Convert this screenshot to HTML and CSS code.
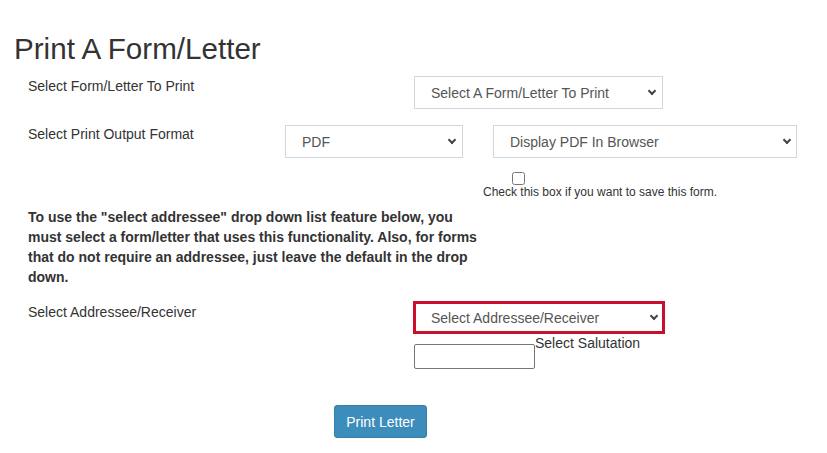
FILE: index.html
```
<!DOCTYPE html>
<html lang="en">
<head>
<meta charset="utf-8">
<title>Print A Form/Letter</title>
<link rel="stylesheet" href="styles.css">
</head>
<body>
<div class="page">
  <h1 class="title">Print A Form/Letter</h1>
  <form class="form">
    <div class="row row-form">
      <label class="lbl lbl-wide">Select Form/Letter To Print</label>
      <span class="sel sel-form"><select><option>Select A Form/Letter To Print</option></select></span>
    </div>
    <div class="row row-format">
      <label class="lbl lbl-narrow">Select Print Output Format</label>
      <span class="sel sel-pdf"><select><option>PDF</option></select></span>
      <span class="sel sel-display"><select><option>Display PDF In Browser</option></select></span>
    </div>
    <div class="save">
      <input type="checkbox" class="save-box">
      <div class="save-text">Check this box if you want to save this form.</div>
    </div>
    <p class="note">To use the "select addressee" drop down list feature below, you must select a form/letter that uses this functionality. Also, for forms that do not require an addressee, just leave the default in the drop down.</p>
    <div class="row row-addr">
      <label class="lbl lbl-addr">Select Addressee/Receiver</label>
      <span class="sel sel-addr"><select><option>Select Addressee/Receiver</option></select></span>
    </div>
    <div class="salutation">
      <input type="text" class="sal-input">
      <span class="sal-text">Select Salutation</span>
    </div>
    <button type="button" class="btn">Print Letter</button>
  </form>
</div>
</body>
</html>
```
FILE: styles.css
```
html, body {
  margin: 0;
  padding: 0;
  background: #ffffff;
}
body {
  font-family: "Liberation Sans", Arial, sans-serif;
  color: #333333;
  font-size: 14px;
}
.title {
  margin: 32px 0 0 14px;
  font-size: 29.6px;
  line-height: 34px;
  font-weight: normal;
  color: #333333;
}
.form {
  margin: 0;
  padding-left: 28px;
}
.row {
  display: flex;
  align-items: flex-start;
}
.lbl {
  flex: none;
  font-size: 14px;
  line-height: 20px;
  color: #333333;
}
.lbl-wide { width: 386px; }
.lbl-narrow { width: 257px; margin-top: -1px; }
.lbl-addr { width: 385px; margin-top: 1px; }
.row-form { margin-top: 10px; }
.row-format { margin-top: 16px; }
.sel {
  position: relative;
  display: block;
  flex: none;
}
.sel select {
  display: block;
  width: 100%;
  height: 33px;
  box-sizing: border-box;
  appearance: none;
  -webkit-appearance: none;
  border: 1px solid #d2d6de;
  border-radius: 0;
  background: #ffffff;
  color: #555555;
  font-family: "Liberation Sans", Arial, sans-serif;
  font-size: 14px;
  padding: 0 20px 0 16px;
  margin: 0;
}
.sel::after {
  content: "";
  position: absolute;
  right: 8px;
  top: 12px;
  width: 4px;
  height: 4px;
  border-right: 2px solid #444444;
  border-bottom: 2px solid #444444;
  transform: rotate(45deg);
  pointer-events: none;
}
.sel-form { width: 249px; }
.sel-pdf { width: 178px; }
.sel-display { width: 304px; margin-left: 30px; }
.sel-display::after { right: 7px; }
.sel-addr { width: 252px; margin-left: 0; }
.sel-addr select {
  border: 3px solid #c8102e;
  padding-left: 15px;
}
.sel-addr::after { right: 8px; }
.save { margin-top: 14px; }
.save-box {
  display: block;
  margin: 0 0 0 484px;
  width: 13px;
  height: 13px;
}
.save-text {
  margin-left: 455px;
  font-size: 12px;
  line-height: 14px;
  color: #333333;
}
.note {
  margin: 8px 0 0 0;
  width: 456px;
  font-size: 14px;
  line-height: 20px;
  font-weight: bold;
  color: #333333;
}
.row-addr { margin-top: 14px; }
.salutation {
  display: flex;
  align-items: flex-start;
  margin-top: -1px;
  margin-left: 386px;
}
.sal-input {
  width: 121px;
  height: 25px;
  box-sizing: border-box;
  margin: 11px 0 0 0;
  border: 1px solid #767676;
  border-radius: 2px;
  padding: 0 2px;
  font-family: "Liberation Sans", Arial, sans-serif;
  font-size: 13px;
}
.sal-text {
  font-size: 14px;
  line-height: 20px;
  color: #333333;
}
.btn {
  display: block;
  margin: 36px 0 0 306px;
  width: 93px;
  height: 33px;
  box-sizing: border-box;
  background: #3c8dbc;
  border: 1px solid #367fa9;
  border-radius: 3px;
  color: #ffffff;
  font-family: "Liberation Sans", Arial, sans-serif;
  font-size: 14px;
  padding: 0;
}
```
